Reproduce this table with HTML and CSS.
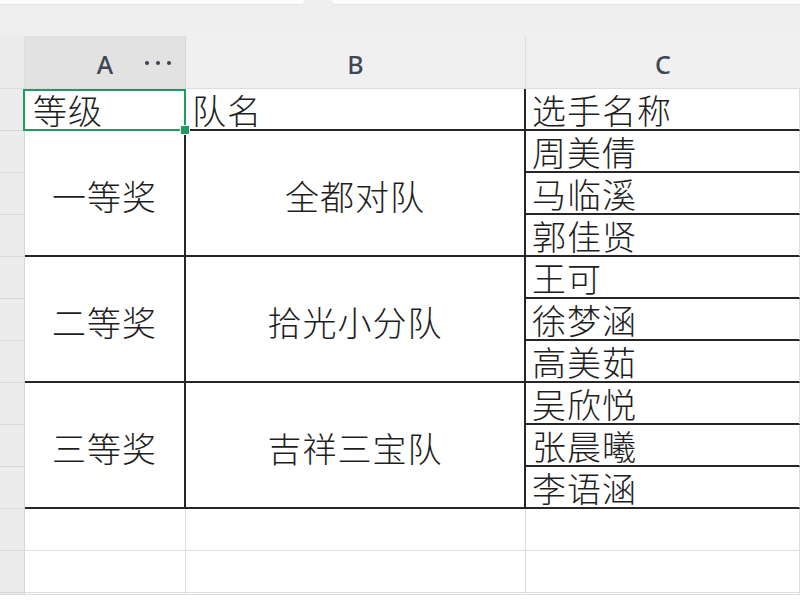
FILE: index.html
```html
<!DOCTYPE html>
<html lang="zh">
<head>
<meta charset="utf-8">
<title>Sheet</title>
<link rel="stylesheet" href="styles.css">
</head>
<body>
<div class="topbar">
  <div class="tab tab-left"></div>
  <div class="tab tab-right"></div>
</div>
<div class="sheet">
  <div class="corner"></div>
  <div class="colhead active">A<span class="dots"><i></i><i></i><i></i></span></div>
  <div class="colhead">B</div>
  <div class="colhead last">C</div>

  <div class="rowhead"></div>
  <div class="cell sel">等级<span class="handle"></span></div>
  <div class="cell bb br">队名</div>
  <div class="cell bb">选手名称</div>

  <div class="rowhead"></div>
  <div class="cell merge bb br">一等奖</div>
  <div class="cell merge bb br">全都对队</div>
  <div class="cell bb">周美倩</div>
  <div class="rowhead"></div>
  <div class="cell bb">马临溪</div>
  <div class="rowhead"></div>
  <div class="cell bb">郭佳贤</div>

  <div class="rowhead"></div>
  <div class="cell merge bb br">二等奖</div>
  <div class="cell merge bb br">拾光小分队</div>
  <div class="cell bb">王可</div>
  <div class="rowhead"></div>
  <div class="cell bb">徐梦涵</div>
  <div class="rowhead"></div>
  <div class="cell bb">高美茹</div>

  <div class="rowhead"></div>
  <div class="cell merge bb br">三等奖</div>
  <div class="cell merge bb br">吉祥三宝队</div>
  <div class="cell bb">吴欣悦</div>
  <div class="rowhead"></div>
  <div class="cell bb">张晨曦</div>
  <div class="rowhead"></div>
  <div class="cell bb">李语涵</div>

  <div class="rowhead"></div>
  <div class="cell"></div>
  <div class="cell"></div>
  <div class="cell"></div>
  <div class="rowhead"></div>
  <div class="cell"></div>
  <div class="cell"></div>
  <div class="cell"></div>
  <div class="rowhead"></div>
  <div class="cell"></div>
  <div class="cell"></div>
  <div class="cell"></div>
</div>
</body>
</html>
```

FILE: styles.css
```css
* { box-sizing: border-box; }
html, body {
  margin: 0;
  padding: 0;
  width: 800px;
  height: 600px;
  overflow: hidden;
  background: #ffffff;
}
.topbar {
  height: 36px;
  background: #efefef;
  display: flex;
  justify-content: space-between;
}
.tab {
  height: 4px;
  background: #ffffff;
}
.tab-left {
  width: 304px;
  border-bottom-right-radius: 8px;
  box-shadow: 0 1px 1px rgba(0,0,0,0.04);
}
.tab-right {
  width: 468px;
  border-bottom-left-radius: 8px;
  box-shadow: 0 1px 1px rgba(0,0,0,0.04);
}
.sheet {
  display: grid;
  grid-template-columns: 25px 161px 340px 274px;
  grid-template-rows: 53px repeat(12, 42px);
  font-family: "Noto Sans CJK SC", "Noto Sans", sans-serif;
}
.corner {
  background: #ececec;
  border-right: 1px solid #dedede;
  border-bottom: 1px solid #dcdcdc;
}
.colhead {
  position: relative;
  background: #f0f0f0;
  border-right: 1px solid #dadde6;
  border-bottom: 1px solid #dcdcdc;
  display: flex;
  align-items: center;
  justify-content: center;
  padding-top: 4px;
  font-family: "Noto Sans", "Open Sans", sans-serif;
  font-size: 25px;
  font-weight: 500;
  color: #3f4655;
}
.colhead.active {
  background: #e2e2e2;
  border-right: 1px solid #d4d4d4;
}
.colhead.last { border-right: none; }
.dots {
  position: absolute;
  right: 14px;
  top: 25px;
  display: flex;
  gap: 7px;
}
.dots i {
  display: block;
  width: 4px;
  height: 4px;
  border-radius: 50%;
  background: #3d4350;
}
.rowhead {
  background: #ececec;
  border-right: 1px solid #d6d6d6;
  border-bottom: 1px solid #d8d8d8;
}
.cell {
  position: relative;
  border-right: 1px solid #dcdde2;
  border-bottom: 1px solid #dcdde2;
  font-size: 34px;
  font-weight: 300;
  letter-spacing: 1px;
  color: #1e1e1e;
  display: flex;
  align-items: flex-end;
  padding-left: 6px;
  padding-bottom: 1px;
  line-height: 36px;
  white-space: nowrap;
}
.cell.bb { border-bottom: 2px solid #262626; }
.cell.br { border-right: 2px solid #262626; }
.cell.merge {
  grid-row: span 3;
  justify-content: center;
  align-items: center;
  padding-left: 0;
  padding-top: 6px;
}
.cell.sel {
  border: 2px solid #1f9b5f;
  margin-left: -2px;
  padding-left: 8px;
}
.handle {
  position: absolute;
  right: -6px;
  bottom: -6px;
  width: 10px;
  height: 10px;
  background: #1f9b5f;
  border: 1px solid #ffffff;
  z-index: 2;
}
```
